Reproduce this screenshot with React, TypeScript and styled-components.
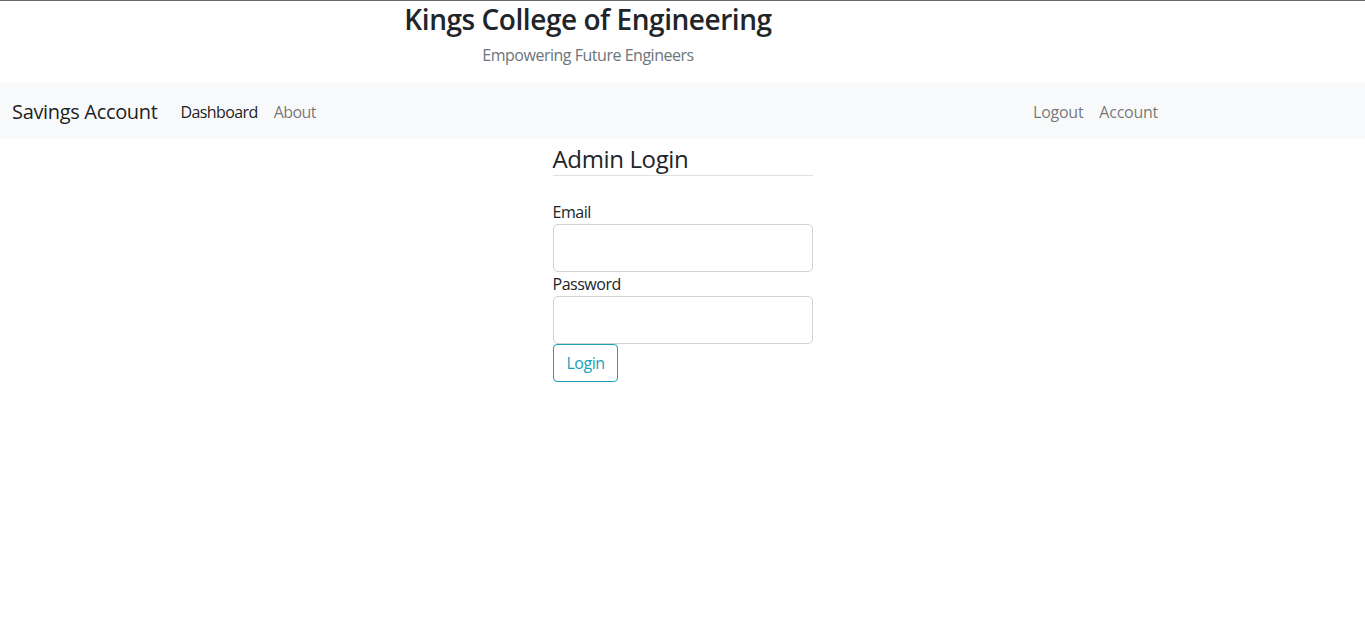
import React from "react";
import styled, { createGlobalStyle } from "styled-components";

const Global = createGlobalStyle`
  * { box-sizing: border-box; }
  html, body { margin: 0; padding: 0; background: #fff; }
  body {
    font-family: "Segoe UI", "Open Sans", "Liberation Sans", sans-serif;
    font-size: 16px;
    line-height: 1.5;
    letter-spacing: -0.48px;
    color: #212529;
    border-top: 1px solid #6b6b6b;
  }
`;

const Header = styled.header`
  width: 1176px;
  text-align: center;
`;

const Title = styled.h3`
  margin: 2px 0 6px;
  font-size: 28px;
  font-weight: 600;
  line-height: 1.2;
  letter-spacing: -0.45px;
  color: #212529;
`;

const Subtitle = styled.p`
  margin: 0 0 16px;
  font-size: 16px;
  color: #6c757d;
`;

const NavBar = styled.nav`
  display: flex;
  align-items: center;
  background: #f8f9fa;
  padding: 8px 199px 8px 12px;
`;

const Brand = styled.span`
  font-size: 20px;
  line-height: 1.5;
  letter-spacing: -0.33px;
  padding: 6px 0 4px;
  margin-right: 16px;
  color: rgba(0, 0, 0, 0.9);
`;

const NavList = styled.div<{ $right?: boolean }>`
  display: flex;
  margin-left: ${(p) => (p.$right ? "auto" : "-1px")};
  letter-spacing: ${(p) => (p.$right ? "-0.25px" : "-0.6px")};
`;

const NavLink = styled.a<{ $active?: boolean }>`
  display: block;
  padding: 9px 8px 7px;
  color: ${(p) => (p.$active ? "rgba(0,0,0,0.9)" : "rgba(0,0,0,0.55)")};
  text-decoration: none;
  cursor: pointer;
`;

const Main = styled.main`
  display: flex;
  justify-content: center;
`;

const Form = styled.form`
  width: 260px;
  display: flex;
  flex-direction: column;
  align-items: flex-start;
`;

const FormTitle = styled.h4`
  align-self: stretch;
  margin: 6px 0 24px;
  padding-bottom: 2px;
  font-size: 24px;
  font-weight: 400;
  line-height: 1.2;
  letter-spacing: -0.36px;
  border-bottom: 1px solid #dee2e6;
`;

const Label = styled.label`
  display: block;
  font-size: 16px;
  line-height: 24px;
`;

const Input = styled.input`
  display: block;
  width: 260px;
  height: 48px;
  padding: 8px 16px;
  font-size: 20px;
  font-family: inherit;
  border: 1px solid #ced4da;
  border-radius: 5px;
  background: #fff;
  outline: none;
`;

const Button = styled.button`
  height: 38px;
  padding: 6px 12px 6px 13px;
  font-family: inherit;
  font-size: 16px;
  line-height: 1.5;
  letter-spacing: -0.48px;
  color: #17a2b8;
  background: transparent;
  border: 1px solid #17a2b8;
  border-radius: 4px;
  cursor: pointer;
`;

export default function App() {
  return (
    <>
      <Global />
      <Header>
        <Title>Kings College of Engineering</Title>
        <Subtitle>Empowering Future Engineers</Subtitle>
      </Header>
      <NavBar>
        <Brand>Savings Account</Brand>
        <NavList>
          <NavLink $active>Dashboard</NavLink>
          <NavLink>About</NavLink>
        </NavList>
        <NavList $right>
          <NavLink>Logout</NavLink>
          <NavLink>Account</NavLink>
        </NavList>
      </NavBar>
      <Main>
        <Form onSubmit={(e) => e.preventDefault()}>
          <FormTitle>Admin Login</FormTitle>
          <Label htmlFor="email">Email</Label>
          <Input id="email" type="email" />
          <Label htmlFor="password">Password</Label>
          <Input id="password" type="password" />
          <Button type="submit">Login</Button>
        </Form>
      </Main>
    </>
  );
}
